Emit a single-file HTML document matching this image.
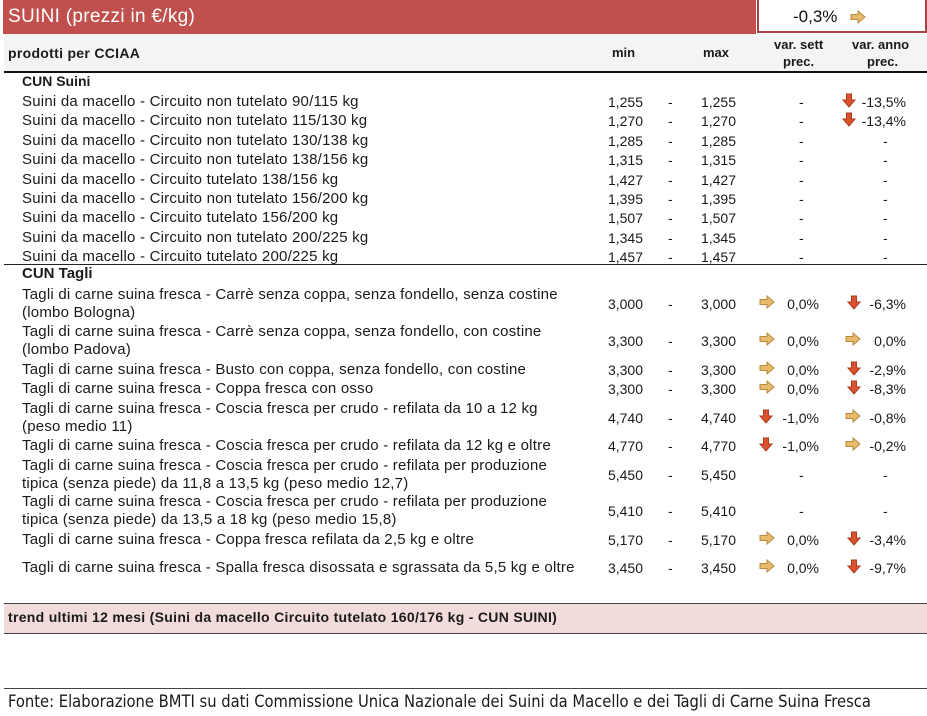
<!DOCTYPE html>
<html><head><meta charset="utf-8"><style>
body{margin:0;width:927px;height:716px;background:#fff;position:relative;overflow:hidden;font-family:"Liberation Sans",sans-serif;color:#1a1a1a}
.a{position:absolute;white-space:nowrap;font-size:14px;line-height:16px}
.d{font-size:15px;letter-spacing:0.22px}
.r{text-align:right}
.b{font-weight:bold}
.hl{position:absolute;left:4px;right:0;height:1px;background:#222}
svg{position:absolute}
</style></head><body>
<div style="position:absolute;left:3px;top:0;width:753px;height:34px;background:#c0504d"></div>
<div class="a" style="left:8px;top:7px;font-size:19px;line-height:20px;color:#fff;letter-spacing:0.3px">SUINI (prezzi in €/kg)</div>
<div style="position:absolute;left:757px;top:0;width:166px;height:31px;border:2px solid #a94442;border-top:0;background:#fff"></div>
<div class="a" style="left:793px;top:8px;font-size:17px;line-height:18px;color:#111">-0,3%</div>
<svg style="left:850px;top:10px" width="16" height="14" viewBox="0 0 16 14"><path d="M1 4.5H8V1L15 7L8 13V9.5H1Z" fill="#e6bb6a" stroke="#b68a3a" stroke-width="1"/></svg>
<div style="position:absolute;left:4px;top:34px;right:0;height:37px;background:#f4f4f4"></div>
<div class="a b" style="left:8px;top:45px;font-size:14px;letter-spacing:0.3px">prodotti per CCIAA</div>
<div class="a b" style="left:612px;top:45px;font-size:13px">min</div>
<div class="a b" style="left:703px;top:45px;font-size:13px">max</div>
<div class="a b" style="left:774px;top:37px;font-size:13px">var. sett</div>
<div class="a b" style="left:783px;top:54px;font-size:13px">prec.</div>
<div class="a b" style="left:852px;top:37px;font-size:13px">var. anno</div>
<div class="a b" style="left:867px;top:54px;font-size:13px">prec.</div>
<div class="hl" style="top:71px;height:2px;background:#111"></div>
<div class="a b" style="left:22px;top:73px">CUN Suini</div>
<div class="hl" style="top:264px"></div>
<div class="a b" style="left:22px;top:266px;font-size:15px">CUN Tagli</div>
<div class="hl" style="top:603px;background:#444"></div>
<div style="position:absolute;left:4px;right:0;top:604px;height:29px;background:#f2dcdb"></div>
<div class="a b" style="left:8px;top:609px;font-size:14px;letter-spacing:0.3px">trend ultimi 12 mesi (Suini da macello Circuito tutelato 160/176 kg - CUN SUINI)</div>
<div class="hl" style="top:633px;background:#444"></div>
<div class="hl" style="top:688px;background:#444"></div>
<div class="a" style="left:8px;top:693px;line-height:18px;font-family:'DejaVu Sans Condensed','Liberation Sans',sans-serif;font-size:16.4px">Fonte: Elaborazione BMTI su dati Commissione Unica Nazionale dei Suini da Macello e dei Tagli di Carne Suina Fresca</div>
<div id="rows"></div>
<script>
var R='<path d="M1 4.5H8V1L15 7L8 13V9.5H1Z" fill="#e6bb6a" stroke="#b68a3a" stroke-width="1"/>';
var D='<path d="M4.5 1H9.5V7H13L7 14L1 7H4.5Z" fill="#d9542e" stroke="#b03a1c" stroke-width="1"/>';
var rows=[
[102,["Suini da macello - Circuito non tutelato 90/115 kg"],"1,255","-","","D","-13,5%"],
[121,["Suini da macello - Circuito non tutelato 115/130 kg"],"1,270","-","","D","-13,4%"],
[141,["Suini da macello - Circuito non tutelato 130/138 kg"],"1,285","-","","","-"],
[160,["Suini da macello - Circuito non tutelato 138/156 kg"],"1,315","-","","","-"],
[180,["Suini da macello - Circuito tutelato 138/156 kg"],"1,427","-","","","-"],
[199,["Suini da macello - Circuito non tutelato 156/200 kg"],"1,395","-","","","-"],
[218,["Suini da macello - Circuito tutelato 156/200 kg"],"1,507","-","","","-"],
[238,["Suini da macello - Circuito non tutelato 200/225 kg"],"1,345","-","","","-"],
[257,["Suini da macello - Circuito tutelato 200/225 kg"],"1,457","-","","","-"],
[304,["Tagli di carne suina fresca - Carrè senza coppa, senza fondello, senza costine","(lombo Bologna)"],"3,000","0,0%","R","D","-6,3%"],
[341,["Tagli di carne suina fresca - Carrè senza coppa, senza fondello, con costine","(lombo Padova)"],"3,300","0,0%","R","R","0,0%"],
[370,["Tagli di carne suina fresca - Busto con coppa, senza fondello, con costine"],"3,300","0,0%","R","D","-2,9%"],
[389,["Tagli di carne suina fresca - Coppa fresca con osso"],"3,300","0,0%","R","D","-8,3%"],
[418,["Tagli di carne suina fresca - Coscia fresca per crudo - refilata da 10 a 12 kg","(peso medio 11)"],"4,740","-1,0%","D","R","-0,8%"],
[446,["Tagli di carne suina fresca - Coscia fresca per crudo - refilata da 12 kg e oltre"],"4,770","-1,0%","D","R","-0,2%"],
[475,["Tagli di carne suina fresca - Coscia fresca per crudo - refilata per produzione","tipica (senza piede) da 11,8 a 13,5 kg (peso medio 12,7)"],"5,450","-","","","-"],
[511,["Tagli di carne suina fresca - Coscia fresca per crudo - refilata per produzione","tipica (senza piede) da 13,5 a 18 kg (peso medio 15,8)"],"5,410","-","","","-"],
[540,["Tagli di carne suina fresca - Coppa fresca refilata da 2,5 kg e oltre"],"5,170","0,0%","R","D","-3,4%"],
[568,["Tagli di carne suina fresca - Spalla fresca disossata e sgrassata da 5,5 kg e oltre"],"3,450","0,0%","R","D","-9,7%"]];
var h='';
rows.forEach(function(r){var y=r[0];
 if(r[1].length==1)h+='<div class="a d" style="left:22px;top:'+(y-8)+'px">'+r[1][0]+'</div>';
 else{h+='<div class="a d" style="left:22px;top:'+(y-17)+'px">'+r[1][0]+'</div><div class="a d" style="left:22px;top:'+(y+1)+'px">'+r[1][1]+'</div>';}
 h+='<div class="a r" style="left:580px;width:63px;top:'+(y-8)+'px">'+r[2]+'</div>';
 h+='<div class="a" style="left:668px;top:'+(y-8)+'px">-</div>';
 h+='<div class="a r" style="left:670px;width:66px;top:'+(y-8)+'px">'+r[2]+'</div>';
 if(r[3]=="-")h+='<div class="a" style="left:799px;top:'+(y-8)+'px">-</div>';
 else h+='<div class="a r" style="left:770px;width:49px;top:'+(y-8)+'px">'+r[3]+'</div>';
 if(r[4])h+='<svg style="left:759px;top:'+(y-9)+'px" width="16" height="15" viewBox="0 0 16 15">'+(r[4]=="R"?R:D)+'</svg>';
 if(r[6]=="-")h+='<div class="a" style="left:883px;top:'+(y-8)+'px">-</div>';
 else h+='<div class="a r" style="left:850px;width:56px;top:'+(y-8)+'px">'+r[6]+'</div>';
 if(r[5])h+='<svg style="left:'+(r[5]=="R"?845:(r[6].length>5?842:847))+'px;top:'+(y-9)+'px" width="16" height="15" viewBox="0 0 16 15">'+(r[5]=="R"?R:D)+'</svg>';
});
document.getElementById('rows').innerHTML=h;
</script>
</body></html>
